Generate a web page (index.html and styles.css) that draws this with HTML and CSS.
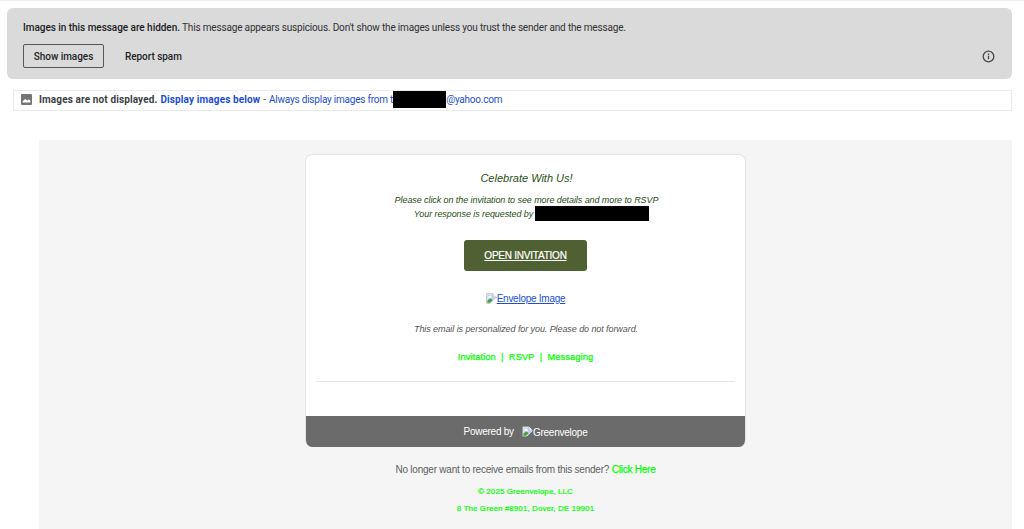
FILE: index.html
```
<!DOCTYPE html>
<html>
  <head>
    <meta charset="utf-8">
    <title>Celebrate With Us!</title>
    <link rel="stylesheet" href="styles.css">
  </head>
  <body>
    <div class="warning">
      <p class="warning_text"><b>Images in this message are hidden.</b> <span>This message appears suspicious. Don't show the images unless you trust the sender and the message.</span></p>
      <div class="warning_actions">
        <button class="btnshow">Show images</button>
        <button class="btnspam">Report spam</button>
        <svg class="info" viewBox="0 0 24 24">
          <circle cx="12" cy="12" r="9.8" />
          <path d="M12 10.8v6.4M12 6.6v2.4" />
        </svg>
      </div>
    </div>

    <div class="images_bar">
      <svg class="picture" viewBox="0 0 20 20">
        <path fill-rule="evenodd" d="M2 0h16a2 2 0 0 1 2 2v16a2 2 0 0 1-2 2H2a2 2 0 0 1-2-2V2a2 2 0 0 1 2-2zM3 15.500h14v-3.500l-3-2-2.500 2-4-3-4.500 4z" />
      </svg>
      <b class="notice">Images are not displayed.</b>
      <a class="display"><b>Display images below</b></a>
      <span class="dash">-</span>
      <a class="always">Always display images from t</a><span class="redacted sender"></span><a class="domain">@yahoo.com</a>
    </div>

    <div class="message">
      <div class="card">
        <div class="card_main">
          <h3>Celebrate With Us!</h3>
          <p class="details">Please click on the invitation to see more details and more to RSVP</p>
          <p class="response"><span>Your response is requested by</span><span class="redacted date"></span></p>
          <a class="btnopen"><span>OPEN INVITATION</span></a>
          <div class="envelope">
            <svg class="broken" viewBox="0 0 16 16">
              <path class="sheet" d="M1 1h9l5 5v9H1z" />
              <path class="sky" d="M2 2h8v4h4v3l-8 5H2z" />
              <path class="cloud" d="M3.500 7a1.500 1.500 0 0 1 1-2.500 2 2 0 0 1 3.500 1 1 1 0 0 1 0 1.500z" />
              <path class="hill" d="M2 14v-3l4-3 4 2-4 4z" />
              <path class="fold" d="M10 1v5h5" />
              <path class="tear" d="M6 16L16 7v9z" />
            </svg>
            <a>Envelope Image</a>
          </div>
          <p class="personal">This email is personalized for you. Please do not forward.</p>
          <div class="links">
            <a>Invitation</a><i>|</i><a>RSVP</a><i>|</i><a>Messaging</a>
          </div>
          <hr>
        </div>
        <div class="powered">
          <span class="by">Powered by</span>
          <svg class="broken" viewBox="0 0 16 16">
            <path class="sheet" d="M1 1h9l5 5v9H1z" />
            <path class="sky" d="M2 2h8v4h4v3l-8 5H2z" />
            <path class="cloud" d="M3.500 7a1.500 1.500 0 0 1 1-2.500 2 2 0 0 1 3.500 1 1 1 0 0 1 0 1.500z" />
            <path class="hill" d="M2 14v-3l4-3 4 2-4 4z" />
            <path class="fold" d="M10 1v5h5" />
            <path class="tear dark" d="M6 16L16 7v9z" />
          </svg>
          <span class="brand">Greenvelope</span>
        </div>
      </div>
      <p class="unsubscribe">No longer want to receive emails from this sender? <a>Click Here</a></p>
      <p class="company">© 2025 Greenvelope, LLC</p>
      <p class="street">8 The Green #8901, Dover, DE 19901</p>
    </div>
  </body>
</html>
```
FILE: styles.css
```
* {
  box-sizing: border-box;
}
body {
  margin: 0;
  height: 529px;
  overflow: hidden;
  display: flex;
  flex-direction: column;
  border-top: 1px solid #ececec;
  background-color: white;
  font-family: Roboto, "Liberation Sans", sans-serif;
  font-size: 10px;
  white-space: nowrap;
}
p, h3 {
  margin: 0;
}
b {
  font-weight: 500;
}
.warning {
  flex: none;
  height: 71px;
  margin: 7px 12px 0 7px;
  padding: 12px 17px 0 16px;
  border-radius: 6px;
  background-color: #dadada;
  color: #303134;
}
.warning_text {
  height: 14px;
  line-height: 15px;
  letter-spacing: -0.17px;
}
.warning_text b {
  color: #202124;
  letter-spacing: -0.04px;
}
.warning_actions {
  display: flex;
  align-items: center;
  margin-top: 10px;
}
button {
  height: 24px;
  padding: 0;
  border: none;
  background: none;
  color: #252629;
  font: 500 10px Roboto, sans-serif;
  letter-spacing: -0.05px;
}
.btnshow {
  width: 81px;
  border: 1px solid #55575a;
  border-radius: 2px;
}
.btnspam {
  margin-left: 21px;
}
.info {
  width: 13px;
  height: 13px;
  margin-left: auto;
  fill: none;
  stroke: #4a4b4d;
  stroke-width: 2.5;
}
.images_bar {
  flex: none;
  display: flex;
  align-items: center;
  height: 21px;
  margin: 11px 12px 0 13px;
  padding: 0 0 2px 7px;
  border: 1px solid #ebebeb;
  color: #3c4043;
  line-height: 14px;
}
.images_bar b {
  font-weight: 700;
  letter-spacing: 0.12px;
}
.images_bar a {
  color: #1b4fd0;
}
.images_bar .always, .images_bar .domain {
  letter-spacing: -0.22px;
}
.picture {
  width: 11px;
  height: 11px;
  margin-right: 7px;
  fill: #757575;
}
.display {
  margin: 0 3px;
}
.dash {
  margin-right: 3px;
}
.redacted {
  background-color: black;
}
.sender {
  width: 53px;
  height: 17px;
}
.message {
  flex: 1;
  margin: 29px 12px 0 39px;
  padding-top: 14px;
  background-color: #f5f5f5;
  font-family: "Liberation Sans", Arial, sans-serif;
  font-size: 9px;
  text-align: center;
}
.card {
  width: 441px;
  height: 293px;
  margin: 0 auto;
  display: flex;
  flex-direction: column;
  border: 1px solid #e3e3e3;
  border-bottom: none;
  border-radius: 7px;
  overflow: hidden;
  background-color: white;
}
.card_main {
  flex: 1;
  display: flex;
  flex-direction: column;
  align-items: center;
  padding: 15px 10px 0;
}
h3 {
  margin-left: 2px;
  color: #274e13;
  font-size: 11px;
  font-weight: normal;
  font-style: italic;
  line-height: 16px;
}
.details, .response {
  color: #274e13;
  font-style: italic;
  line-height: 14px;
  letter-spacing: -0.08px;
}
.details {
  margin-top: 7px;
  margin-left: 2px;
}
.response {
  display: flex;
  align-items: center;
  height: 15px;
  margin-top: -1px;
  margin-left: 12px;
}
.date {
  width: 114px;
  height: 15px;
  margin-left: 2px;
}
.btnopen {
  width: 123px;
  height: 31px;
  margin-top: 19px;
  border-radius: 3px;
  background-color: #4f6032;
  color: white;
  font-size: 10px;
  line-height: 32px;
  letter-spacing: -0.23px;
  text-decoration: underline;
  -webkit-text-stroke: 0.2px white;
}
.envelope {
  display: flex;
  align-items: center;
  height: 14px;
  margin-top: 20px;
}
.envelope a {
  color: #1b4fd0;
  font-size: 10px;
  letter-spacing: -0.26px;
  text-decoration: underline;
}
.broken {
  width: 11px;
  height: 11px;
}
.sheet {
  fill: white;
  stroke: #a5a5a5;
}
.sky {
  fill: #c3d5f7;
}
.cloud {
  fill: white;
}
.hill {
  fill: #4ba043;
}
.fold {
  fill: white;
  stroke: #a5a5a5;
}
.tear {
  fill: white;
}
.dark {
  fill: #6b6b6b;
}
.personal {
  margin-top: 17px;
  margin-left: 1px;
  color: #555;
  font-style: italic;
  line-height: 14px;
  letter-spacing: -0.08px;
}
.links {
  display: flex;
  height: 14px;
  margin-top: 14px;
  color: #00ff00;
  font-size: 9.3px;
  line-height: 14px;
  letter-spacing: 0.08px;
  -webkit-text-stroke: 0.25px #00ff00;
}
.links i {
  width: 13px;
  font-style: normal;
}
hr {
  width: 100%;
  height: 1px;
  margin: 17px 0 0;
  border: none;
  background-color: #e6e6e6;
}
.powered {
  display: flex;
  justify-content: center;
  align-items: center;
  height: 31px;
  background-color: #6b6b6b;
  color: white;
  font-size: 10px;
  letter-spacing: -0.24px;
}
.powered .broken {
  margin-left: 8px;
}
.brand {
  padding-top: 1px;
}
.unsubscribe {
  margin-top: 15px;
  color: #606060;
  font-size: 10px;
  line-height: 15px;
  letter-spacing: -0.23px;
}
.unsubscribe a {
  color: #00ff00;
  -webkit-text-stroke: 0.25px #00ff00;
}
.company, .street {
  color: #00ff00;
  font-size: 8px;
  line-height: 12px;
  letter-spacing: 0.08px;
  -webkit-text-stroke: 0.2px #00ff00;
}
.company {
  margin-top: 9px;
}
.street {
  margin-top: 5px;
}
```
